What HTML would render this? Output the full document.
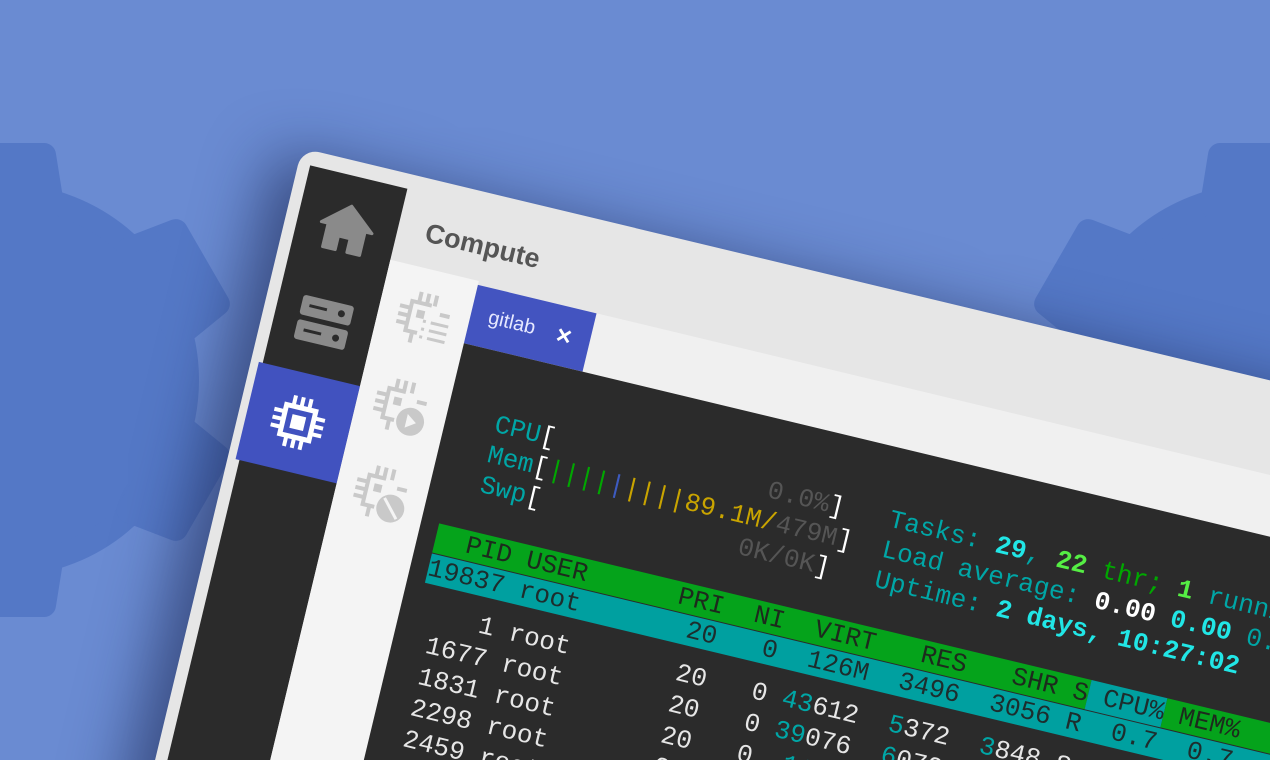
<!DOCTYPE html>
<html style="width:1270px;height:760px;overflow:hidden"><head><meta charset="utf-8"><style>
html,body{margin:0;padding:0;}
body{width:1270px;height:760px;overflow:hidden;background:#6a8bd2;position:relative;font-family:"Liberation Sans",sans-serif;}
#bg{position:absolute;left:0;top:0}
#clip{position:absolute;left:0;top:0;width:1270px;height:760px;overflow:hidden;}
#win{position:absolute;left:302px;top:148px;width:1500px;height:1100px;transform-origin:0 0;transform:rotate(13.5deg);background:#e6e6e6;border-radius:18px 0 0 0;box-shadow:-25px 10px 60px rgba(20,30,70,.55);}
#side{position:absolute;left:12px;top:15px;width:100px;height:1100px;background:#2b2b2b;}
.si{position:absolute;left:0;width:100px;height:100px;display:flex;align-items:center;justify-content:center;}
#hdr{position:absolute;left:140px;top:38px;font-size:27px;font-weight:bold;color:#555;}
#col{position:absolute;left:112px;top:88px;width:91px;height:1100px;background:#f4f4f4;}
#tabrow{position:absolute;left:203px;top:92px;width:1400px;height:60px;background:#f0f0f0;}
#tab{position:absolute;left:203px;top:92px;width:122px;height:60px;background:#4354c0;color:#e6e8ff;font-size:20px;}
#term{position:absolute;left:203px;top:152px;width:1400px;height:1000px;background:#2b2b2b;}
pre{position:absolute;left:221px;top:209px;margin:0;font-family:"Liberation Mono",monospace;font-size:26px;line-height:31px;color:#e6e6e6;}
pre.r{top:407px;line-height:32px;}
.t{color:#00a6a6}.w{color:#fff}.g{color:#00a800}.b{color:#3d5bc0}.y{color:#c9a400}.d{color:#555}
.c{color:#21e6e6;font-weight:bold}.G{color:#55ee44;font-weight:bold}.W{color:#fff;font-weight:bold}
.hg{background:#05a31b;color:#1d2a1d}.ht{background:#00a0a0;color:#1d2d2d}
</style></head><body>
<div id="clip">
<svg id="bg" width="1270" height="760">
<g fill="#5478c6" stroke="#5478c6" stroke-width="24" stroke-linejoin="round">
<g transform="translate(2,380)">
<circle r="185"/>
<g id="teeth"><polygon points="-50,-175 50,-175 42,-225 -42,-225"/>
<polygon points="-50,-175 50,-175 42,-225 -42,-225" transform="rotate(60)"/>
<polygon points="-50,-175 50,-175 42,-225 -42,-225" transform="rotate(120)"/>
<polygon points="-50,-175 50,-175 42,-225 -42,-225" transform="rotate(180)"/>
<polygon points="-50,-175 50,-175 42,-225 -42,-225" transform="rotate(240)"/>
<polygon points="-50,-175 50,-175 42,-225 -42,-225" transform="rotate(300)"/></g>
</g>
<g transform="translate(1262,380)"><circle r="185"/><use href="#teeth"/></g>
</g>
</svg>
<div id="win">
<div id="hdr">Compute</div>
<div id="side">
 <div class="si" style="top:3px"><svg width="56" height="50" viewBox="0 0 56 50"><path d="M28 2 L54 24 L47 24 L47 48 L34 48 L34 34 L22 34 L22 48 L9 48 L9 24 L2 24 Z" fill="#8a8a8a" stroke="#8a8a8a" stroke-width="3" stroke-linejoin="round"/></svg></div>
 <div class="si" style="top:100px"><svg width="56" height="50" viewBox="0 0 56 50"><rect x="2" y="2" width="52" height="20" rx="3" fill="#8a8a8a"/><rect x="2" y="27" width="52" height="20" rx="3" fill="#8a8a8a"/><rect x="10" y="10" width="18" height="3" fill="#2b2b2b"/><rect x="10" y="35" width="18" height="3" fill="#2b2b2b"/><circle cx="43" cy="12" r="3.5" fill="#2b2b2b"/><circle cx="43" cy="37" r="3.5" fill="#2b2b2b"/></svg></div>
 <div class="si" style="top:203px;background:#4152bf;left:-4px;width:104px"><svg width="56" height="56" viewBox="0 0 56 56"><rect x="13" y="13" width="30" height="30" fill="none" stroke="#fff" stroke-width="5"/><rect x="21" y="21" width="14" height="14" fill="#fff"/><g stroke="#fff" stroke-width="4"><path d="M20 2v11M28 2v11M36 2v11M20 43v11M28 43v11M36 43v11M2 20h11M2 28h11M2 36h11M43 20h11M43 28h11M43 36h11"/></g></svg></div>
</div>
<div id="col">
 <svg style="position:absolute;left:18px;top:22px" width="56" height="56" viewBox="0 0 56 56"><g stroke="#c9c9c9" stroke-width="4" fill="none"><path d="M33 13H13v30h12"/><path d="M20 2v11M28 2v11M36 2v11M20 43v11M2 20h11M2 28h11M2 36h11M43 20h10"/><path d="M28 30h3M36 30h18M28 38h3M36 38h18M28 46h3M36 46h18" stroke-width="3"/></g><rect x="20" y="20" width="8" height="8" fill="#c9c9c9"/></svg>
 <svg style="position:absolute;left:16px;top:112px" width="56" height="56" viewBox="0 0 56 56"><g stroke="#c9c9c9" stroke-width="4" fill="none"><path d="M30 13H13v30h12"/><path d="M20 2v11M28 2v11M36 2v11M20 43v11M2 20h11M2 28h11M2 36h11M43 20h10"/></g><rect x="20" y="20" width="8" height="8" fill="#c9c9c9"/><circle cx="41" cy="41" r="14" fill="#c9c9c9"/><path d="M37 34L47 41L37 48Z" fill="#f4f4f4"/></svg>
 <svg style="position:absolute;left:17px;top:201px" width="56" height="56" viewBox="0 0 56 56"><g stroke="#c9c9c9" stroke-width="4" fill="none"><path d="M30 13H13v30h12"/><path d="M20 2v11M28 2v11M36 2v11M20 43v11M2 20h11M2 28h11M2 36h11M43 20h10"/></g><rect x="20" y="20" width="8" height="8" fill="#c9c9c9"/><circle cx="41" cy="41" r="14" fill="#c9c9c9"/><path d="M33 32L49 50" stroke="#f4f4f4" stroke-width="3"/></svg>
</div>
<div id="tabrow"></div>
<div id="tab"><span style="position:absolute;left:18px;top:18px">gitlab</span><span style="position:absolute;left:88px;top:14px;font-size:26px;font-weight:bold;color:#fff">×</span></div>
<div id="term"></div>
<pre>  <span class="t">CPU</span><span class="w">[</span>              <span class="d">0.0%</span><span class="w">]</span>   <span class="t">Tasks: </span><span class="c">29</span><span class="t">, </span><span class="G">22</span><span class="g"> thr; </span><span class="G">1</span><span class="t"> running</span>
  <span class="t">Mem</span><span class="w">[</span><span class="g">||||</span><span class="b">|</span><span class="y">||||89.1M/</span><span class="d">479M</span><span class="w">]</span>  <span class="t">Load average: </span><span class="W">0.00</span> <span class="c">0.00</span> <span class="t">0.00</span>
  <span class="t">Swp</span><span class="w">[</span>             <span class="d">0K/0K</span><span class="w">]</span>   <span class="t">Uptime: </span><span class="c">2 days, 10:27:02</span>

<span class="hg">  PID USER      PRI  NI  VIRT   RES   SHR S</span><span class="ht"> CPU%</span><span class="hg"> MEM%   TIME+  Command                    </span>
<span class="ht">19837 root       20   0  126M  3496  3056 R  0.7  0.7  0:00.12 htop                       </span></pre>
<pre class="r">    1 root       20   0 <span class="t">43</span>612  <span class="t">5</span>372  <span class="t">3</span>848 S  0.0  1.1  0:05.03 /sbin/init
 1677 root       20   0 <span class="t">39</span>076  <span class="t">6</span>072  <span class="t">5</span>228 S  0.0  1.2  0:00.41 /lib/systemd
 1831 root       20   0  <span class="t">116M</span>  <span class="t">5</span>236  <span class="t">4</span>512 S  0.0  1.1  0:00.22 /usr/sbin
 2298 root       20   0 <span class="t">27</span>728  <span class="t">2</span>640  <span class="t">2</span>356 S  0.0  0.5  0:00.05 /usr/sbin
 2459 root       20   0 <span class="t">72</span>296  <span class="t">5</span>660  <span class="t">4</span>908 S  0.0  1.2  0:00.01 /usr/sbin
 2460 root       20   0 <span class="t">72</span>296  <span class="t">5</span>660  <span class="t">4</span>908 S  0.0  1.2  0:00.00 /usr/sbin</pre>
</div>
</div>
</body></html>
